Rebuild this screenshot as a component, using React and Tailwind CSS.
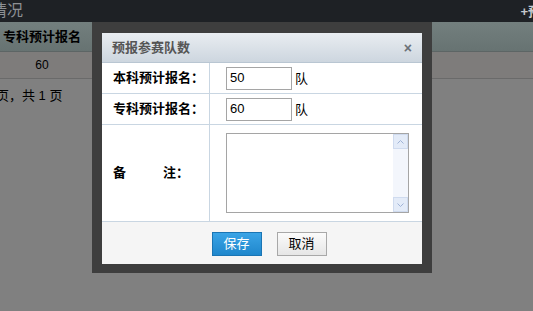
import React from "react";

const font = { fontFamily: '"Liberation Sans", "Noto Sans CJK SC", sans-serif' };

function Row({ label, children, tall }) {
  return (
    <div className={`flex border-b border-[#c9d6e2] ${tall ? "h-[97px]" : "h-[31px]"}`}>
      <div className="w-[108px] shrink-0 border-r border-[#c9d6e2] flex items-center pl-[11px] text-[13px] font-bold text-black">
        {label}
      </div>
      <div className="flex-1 flex items-center pl-[16px]">{children}</div>
    </div>
  );
}

function Unit() {
  return (
    <span className="ml-[3px] text-[13px] text-black font-['Noto_Sans_CJK_SC',sans-serif] antialiased">
      队
    </span>
  );
}

export default function App() {
  return (
    <div className="relative w-[533px] h-[311px] bg-[#808080] overflow-hidden" style={font}>
      {/* top bar */}
      <div className="h-[22px] bg-[#1e2125] flex items-center justify-between overflow-hidden">
        <span className="ml-[-9px] text-[16px] text-[#8d9094] leading-none">情况</span>
        <span className="mr-[-8px] text-[13px] font-bold text-[#c5c8cc] leading-none">+预</span>
      </div>

      {/* table behind overlay */}
      <div className="h-[30px] bg-gradient-to-b from-[#737f7e] to-[#677372] border-b border-[#5d6565] flex">
        <div className="w-[84px] flex items-center justify-center text-[13px] font-bold text-black">
          专科预计报名
        </div>
      </div>
      <div className="h-[27px] bg-[#7e7c7b] border-b border-[#6a6a6a] flex">
        <div className="w-[84px] flex items-center justify-center text-[12px] text-black">60</div>
      </div>
      <div className="ml-[-4px] mt-[7px] text-[13px] text-black">页，共 1 页</div>

      {/* dialog */}
      <div className="absolute left-[92px] top-[22px] w-[340px] h-[251px] bg-[#3e3e3e] pt-[11px] px-[10px] pb-[9px]">
        <div className="w-[320px] h-[231px] bg-white flex flex-col">
          <div className="h-[30px] bg-gradient-to-b from-[#e9edf1] to-[#cdd6df] border-b border-[#b9c6d2] flex items-center justify-between px-[10px]">
            <span className="text-[13px] font-bold text-[#555]">预报参赛队数</span>
            <span className="text-[14px] font-bold text-[#6b7178] leading-none">×</span>
          </div>
          <Row label="本科预计报名：">
            <div className="w-[66px] h-[23px] border border-[#a5a5a5] flex items-center pl-[3px] text-[13px] text-black">50</div>
            <Unit />
          </Row>
          <Row label="专科预计报名：">
            <div className="w-[66px] h-[23px] border border-[#a5a5a5] flex items-center pl-[3px] text-[13px] text-black">60</div>
            <Unit />
          </Row>
          <Row
            tall
            label={
              <span className="flex w-[76px] justify-between">
                <span>备</span>
                <span>注：</span>
              </span>
            }
          >
            <div className="w-[183px] h-[80px] border border-[#a5a5a5] flex justify-end">
              <div className="w-[15px] h-full bg-[#f3f6fc] flex flex-col justify-between">
                <div className="h-[15px] bg-[#e3ebf8] border border-[#cfdbef] flex items-center justify-center">
                  <svg width="7" height="4" viewBox="0 0 7 4">
                    <path d="M0.5 3.5 L3.5 0.5 L6.5 3.5" fill="none" stroke="#9fb3d6" strokeWidth="1" />
                  </svg>
                </div>
                <div className="h-[15px] bg-[#e3ebf8] border border-[#cfdbef] flex items-center justify-center">
                  <svg width="7" height="4" viewBox="0 0 7 4">
                    <path d="M0.5 0.5 L3.5 3.5 L6.5 0.5" fill="none" stroke="#9fb3d6" strokeWidth="1" />
                  </svg>
                </div>
              </div>
            </div>
          </Row>
          <div className="flex-1 bg-[#f5f5f5] flex items-center justify-center gap-[15px] pt-[1px] pl-[14px]">
            <button className="w-[50px] h-[24px] bg-gradient-to-b from-[#3aa4e6] to-[#1f87cc] border border-[#1a75b4] text-white text-[13px]">
              保存
            </button>
            <button className="w-[50px] h-[24px] bg-gradient-to-b from-[#fbfbfb] to-[#e6e6e6] border border-[#a8a8a8] text-black text-[13px]">
              取消
            </button>
          </div>
        </div>
      </div>
    </div>
  );
}
